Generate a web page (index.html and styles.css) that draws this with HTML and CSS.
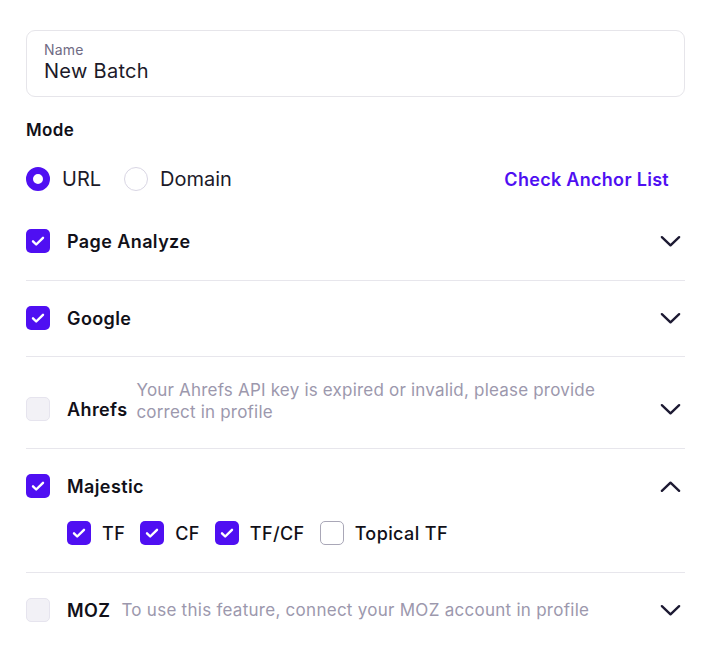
FILE: index.html
```html
<!DOCTYPE html>
<html>
<head>
<meta charset="utf-8">
<link rel="stylesheet" href="styles.css">
</head>
<body>
<div class="form">
  <div class="field">
    <div class="field-label">Name</div>
    <div class="field-value">New Batch</div>
  </div>

  <div class="mode-title">Mode</div>
  <div class="mode-row">
    <label class="radio"><span class="radio-dot on"></span>URL</label>
    <label class="radio"><span class="radio-dot"></span>Domain</label>
    <a class="link">Check Anchor List</a>
  </div>

  <div class="section first">
    <div class="row">
      <span class="cb on"><svg viewBox="0 0 24 24"><path d="M7 12.3l3.2 3.2L17 8.8"/></svg></span>
      <span class="title">Page Analyze</span>
      <svg class="chev" viewBox="0 0 24 24"><path d="M3 7.5l9 8.5L21 7.5"/></svg>
    </div>
  </div>

  <div class="section">
    <div class="row">
      <span class="cb on"><svg viewBox="0 0 24 24"><path d="M7 12.3l3.2 3.2L17 8.8"/></svg></span>
      <span class="title">Google</span>
      <svg class="chev" viewBox="0 0 24 24"><path d="M3 7.5l9 8.5L21 7.5"/></svg>
    </div>
  </div>

  <div class="section ahrefs">
    <div class="row">
      <span class="cb off"></span>
      <span class="title">Ahrefs</span>
      <span class="note">Your Ahrefs API key is expired or invalid, please provide correct in profile</span>
      <svg class="chev" viewBox="0 0 24 24"><path d="M3 7.5l9 8.5L21 7.5"/></svg>
    </div>
  </div>

  <div class="section majestic">
    <div class="row">
      <span class="cb on"><svg viewBox="0 0 24 24"><path d="M7 12.3l3.2 3.2L17 8.8"/></svg></span>
      <span class="title">Majestic</span>
      <svg class="chev" viewBox="0 0 24 24"><path d="M3 16.5l9-8.5L21 16.5"/></svg>
    </div>
    <div class="subrow">
      <label class="sub"><span class="cb on"><svg viewBox="0 0 24 24"><path d="M7 12.3l3.2 3.2L17 8.8"/></svg></span>TF</label>
      <label class="sub"><span class="cb on"><svg viewBox="0 0 24 24"><path d="M7 12.3l3.2 3.2L17 8.8"/></svg></span>CF</label>
      <label class="sub"><span class="cb on"><svg viewBox="0 0 24 24"><path d="M7 12.3l3.2 3.2L17 8.8"/></svg></span>TF/CF</label>
      <label class="sub"><span class="cb empty"></span>Topical TF</label>
    </div>
  </div>

  <div class="section last">
    <div class="row">
      <span class="cb off"></span>
      <span class="title moz">MOZ</span>
      <span class="note one">To use this feature, connect your MOZ account in profile</span>
      <svg class="chev" viewBox="0 0 24 24"><path d="M3 7.5l9 8.5L21 7.5"/></svg>
    </div>
  </div>
</div>
</body>
</html>
```

FILE: styles.css
```css
* { box-sizing: border-box; }
html, body { margin: 0; background: #ffffff; }
body {
  font-family: Inter, "Noto Sans", sans-serif;
  color: #1c1a29;
}
.form {
  width: 659px;
  margin: 30px 0 0 26px;
}
.field {
  height: 67px;
  border: 1px solid #e6e5ea;
  border-radius: 9px;
  padding: 10px 17px 0 17px;
}
.field-label {
  font-size: 14px;
  line-height: 18px;
  color: #6f6b84;
  letter-spacing: 0.2px;
}
.field-value {
  font-size: 20px;
  line-height: 26px;
  color: #1c1a29;
  margin-top: -1px;
  letter-spacing: 0.3px;
}
.mode-title {
  margin-top: 22px;
  font-size: 17px;
  font-weight: 600;
  line-height: 22px;
  color: #111018;
  letter-spacing: 0.4px;
}
.mode-row {
  display: flex;
  align-items: center;
  height: 28px;
  margin-top: 24px;
  padding-right: 16px;
}
.radio {
  display: flex;
  align-items: center;
  gap: 12px;
  font-size: 20px;
  color: #1c1a29;
  margin-right: 23px;
}
.radio-dot {
  width: 24px;
  height: 24px;
  border-radius: 50%;
  border: 1.5px solid #d9d6e4;
  background: #fff;
}
.radio-dot.on {
  border: 7px solid #4f0ff2;
}
.link {
  margin-left: auto;
  font-size: 18px;
  font-weight: 600;
  color: #4f0ff2;
  letter-spacing: 0.3px;
}
.section {
  border-top: 1px solid #e7e6ec;
  padding: 25px 0 26px;
}
.section.first {
  border-top: none;
  padding-top: 36px;
  padding-bottom: 27px;
}
.row {
  display: flex;
  align-items: center;
  min-height: 24px;
}
.cb {
  flex: none;
  width: 24px;
  height: 24px;
  border-radius: 5px;
  display: flex;
  align-items: center;
  justify-content: center;
}
.cb.on { background: #4f0ff2; }
.cb.on svg { width: 24px; height: 24px; fill: none; stroke: #fff; stroke-width: 2.4; stroke-linecap: round; stroke-linejoin: round; }
.cb.off { background: #f2f1f6; border: 1px solid #e6e4ee; }
.cb.empty { background: #fff; border: 1.5px solid #a9a7b7; }
.title {
  margin-left: 17px;
  font-size: 18px;
  font-weight: 600;
  color: #111018;
  letter-spacing: 0.4px;
}
.note {
  margin-left: 9px;
  font-size: 17px;
  line-height: 22px;
  color: #9c98ad;
  width: 480px;
  margin-top: -16px;
  letter-spacing: 0.2px;
}
.note.one { margin-top: 0; margin-left: 11px; width: auto; letter-spacing: 0.27px; }
.chev {
  margin-left: auto;
  margin-right: 3px;
  width: 23px;
  height: 23px;
  fill: none;
  stroke: #1d1a33;
  stroke-width: 2.5;
  stroke-linecap: round;
  stroke-linejoin: round;
  flex: none;
}
.ahrefs { padding: 34px 0 21px; }
.ahrefs .row { min-height: 36px; }
.majestic { padding-bottom: 27px; }
.subrow {
  display: flex;
  align-items: center;
  margin-top: 23px;
  padding-left: 41px;
}
.sub {
  display: flex;
  align-items: center;
  gap: 11px;
  font-size: 18px;
  font-weight: 500;
  color: #111018;
  margin-right: 15px;
  letter-spacing: 0.4px;
}
```
